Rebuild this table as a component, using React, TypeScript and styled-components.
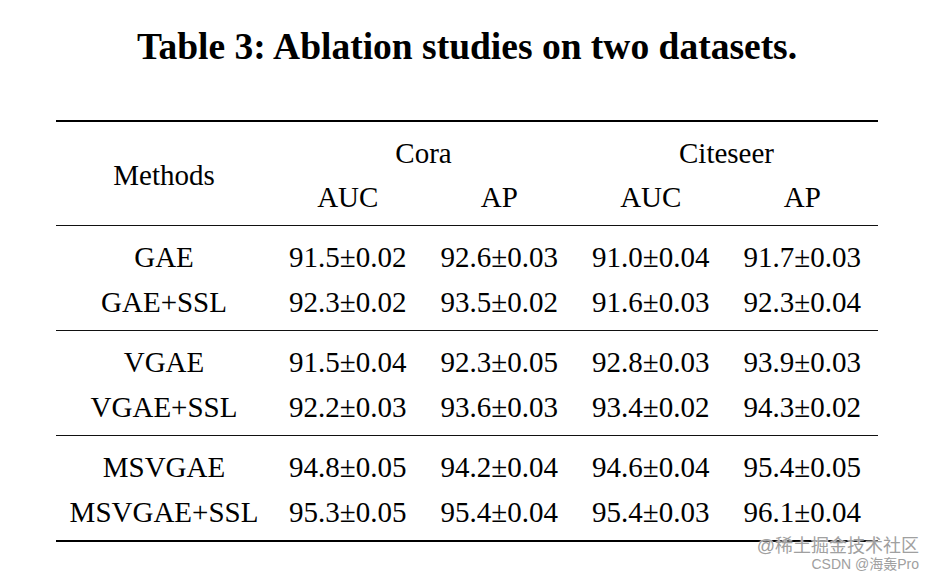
import React from "react";
import styled, { createGlobalStyle } from "styled-components";

const GlobalStyle = createGlobalStyle`
  html, body { margin: 0; padding: 0; background: #ffffff; }
  body { font-family: "Liberation Serif", "Times New Roman", serif; color: #000; }
`;

const Page = styled.div`
  position: relative;
  width: 934px;
  height: 578px;
  overflow: hidden;
  background: #fff;
  display: flex;
  flex-direction: column;
  align-items: center;
`;

const Title = styled.h2`
  margin: 22px 0 0;
  height: 50px;
  line-height: 50px;
  font-size: 37.5px;
  font-weight: 700;
  text-align: center;
  letter-spacing: 0;
`;

const Table = styled.div`
  margin-top: 48px;
  width: 822px;
  border-top: 2px solid #000;
  border-bottom: 2px solid #000;
`;

const Section = styled.div<{ $head?: boolean; $last?: boolean }>`
  display: grid;
  grid-template-columns: 216px repeat(4, 1fr);
  grid-auto-rows: ${(p) => (p.$head ? "44px" : "45px")};
  padding: ${(p) => (p.$head ? "9px 0 6px" : "9px 0 5px")};
  border-bottom: ${(p) => (p.$last ? "none" : "1px solid #111")};
`;

const Cell = styled.div<{ $span?: number; $rows?: number }>`
  font-size: 29px;
  text-align: center;
  white-space: nowrap;
  display: flex;
  align-items: center;
  justify-content: center;
  grid-column: ${(p) => (p.$span ? `span ${p.$span}` : "auto")};
  grid-row: ${(p) => (p.$rows ? `span ${p.$rows}` : "auto")};
`;

const Watermark = styled.div`
  position: absolute;
  right: 15px;
  bottom: 7px;
  display: flex;
  flex-direction: column;
  align-items: flex-end;
  gap: 2px;
  color: #a0a0a0;
  font-family: "Liberation Sans", "Noto Sans CJK SC", sans-serif;
  text-shadow: 0 0 2px #fff, 0 0 1px #fff;
  line-height: 1;
`;

const MarkLine = styled.span<{ $size: number }>`
  font-size: ${(p) => p.$size}px;
  line-height: ${(p) => p.$size}px;
`;

type Row = { name: string; vals: string[] };

const groups: Row[][] = [
  [
    { name: "GAE", vals: ["91.5±0.02", "92.6±0.03", "91.0±0.04", "91.7±0.03"] },
    { name: "GAE+SSL", vals: ["92.3±0.02", "93.5±0.02", "91.6±0.03", "92.3±0.04"] },
  ],
  [
    { name: "VGAE", vals: ["91.5±0.04", "92.3±0.05", "92.8±0.03", "93.9±0.03"] },
    { name: "VGAE+SSL", vals: ["92.2±0.03", "93.6±0.03", "93.4±0.02", "94.3±0.02"] },
  ],
  [
    { name: "MSVGAE", vals: ["94.8±0.05", "94.2±0.04", "94.6±0.04", "95.4±0.05"] },
    { name: "MSVGAE+SSL", vals: ["95.3±0.05", "95.4±0.04", "95.4±0.03", "96.1±0.04"] },
  ],
];

export default function App() {
  return (
    <>
      <GlobalStyle />
      <Page>
        <Title>Table 3: Ablation studies on two datasets.</Title>
        <Table>
          <Section $head>
            <Cell $rows={2}>Methods</Cell>
            <Cell $span={2}>Cora</Cell>
            <Cell $span={2}>Citeseer</Cell>
            <Cell>AUC</Cell>
            <Cell>AP</Cell>
            <Cell>AUC</Cell>
            <Cell>AP</Cell>
          </Section>
          {groups.map((g, gi) => (
            <Section key={gi} $last={gi === groups.length - 1}>
              {g.map((r) => (
                <React.Fragment key={r.name}>
                  <Cell>{r.name}</Cell>
                  {r.vals.map((v, vi) => (
                    <Cell key={vi}>{v}</Cell>
                  ))}
                </React.Fragment>
              ))}
            </Section>
          ))}
        </Table>
        <Watermark>
          <MarkLine $size={18}>@稀土掘金技术社区</MarkLine>
          <MarkLine $size={14}>CSDN @海轰Pro</MarkLine>
        </Watermark>
      </Page>
    </>
  );
}
